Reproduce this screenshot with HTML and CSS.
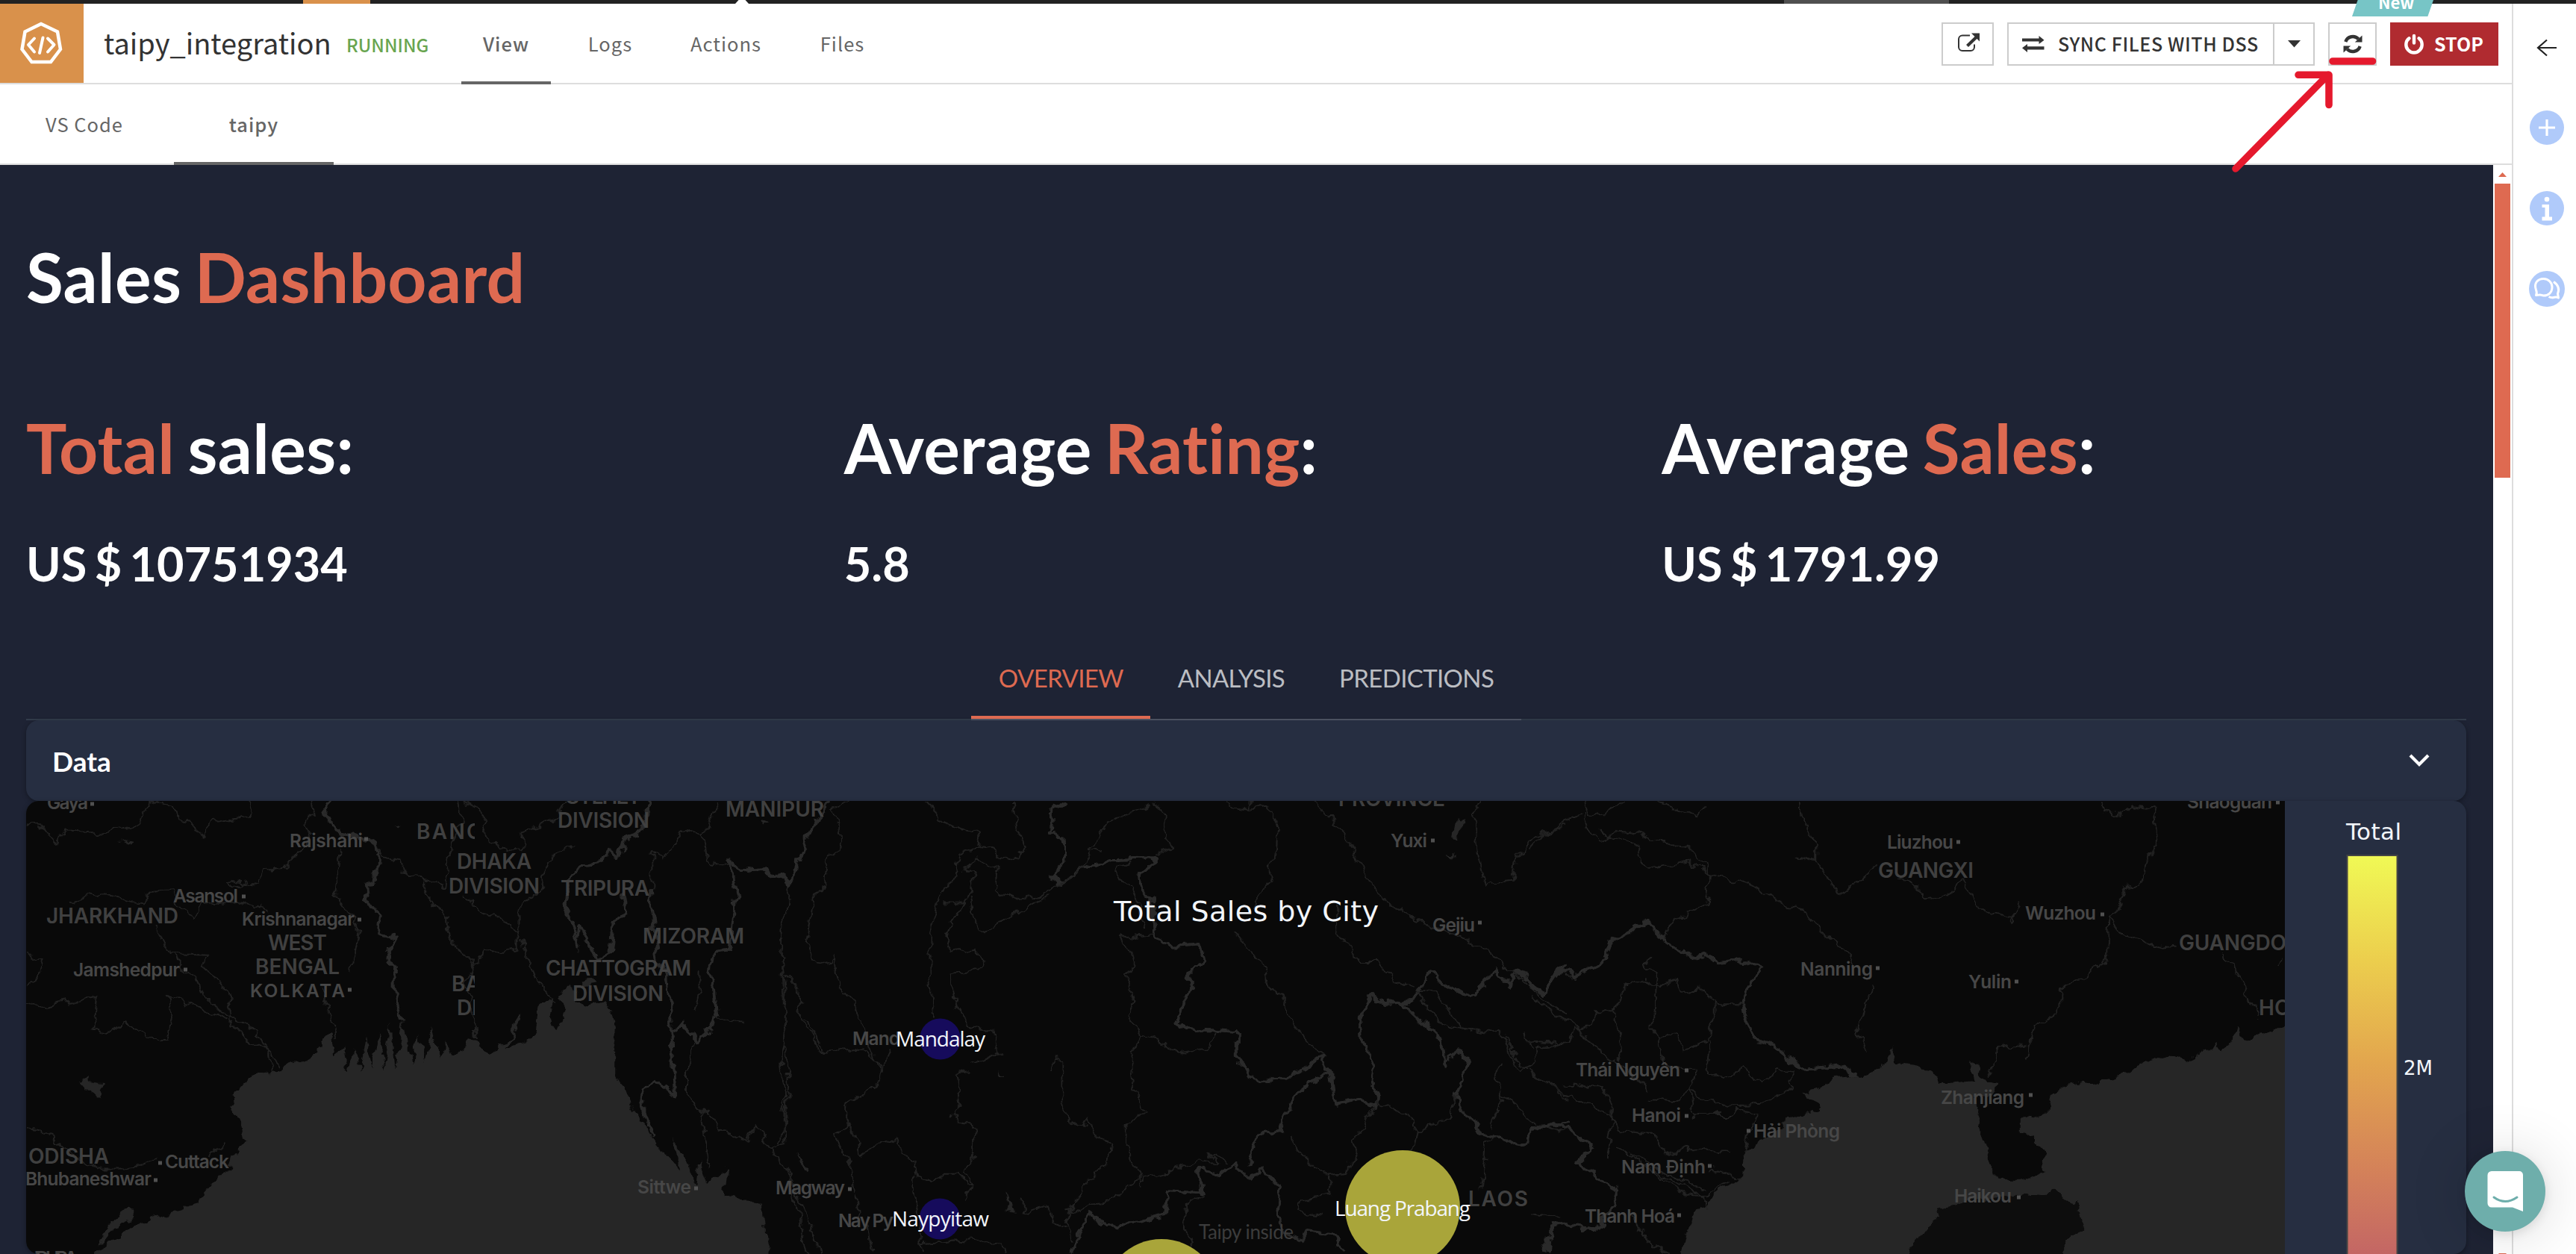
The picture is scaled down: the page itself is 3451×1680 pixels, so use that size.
FILE: index.html
```html
<!DOCTYPE html>
<html lang="en">
<head>
<meta charset="utf-8">
<title>taipy_integration</title>
<link rel="stylesheet" href="styles.css">
</head>
<body>
<div class="strip"><span class="strip-active"></span><i class="strip-notch"></i><span class="strip-search"></span></div>
<div class="shell">
  <main class="main">
    <header class="header">
      <div class="logo">
        <svg width="58" height="57" viewBox="0 0 58 57" fill="none" stroke="#fff" stroke-width="4.500" stroke-linecap="round" stroke-linejoin="round">
          <path stroke-linejoin="miter" d="M29 3 51 13.500 55 37 42 54H16.500L3.500 37 7.500 13.500Z"/>
          <path stroke-width="4" d="M20 22.500 12 31 20 40.500M38 22.500 46.500 31 38 40.500M31.500 21.500 27 42"/>
        </svg>
      </div>
      <h1 class="title">taipy_integration</h1>
      <span class="status">RUNNING</span>
      <nav class="tabs">
        <a class="tab tab-view on">View</a>
        <a class="tab tab-logs">Logs</a>
        <a class="tab tab-actions">Actions</a>
        <a class="tab tab-files">Files</a>
      </nav>
      <div class="actions">
        <div class="btn btn-open">
          <svg width="32" height="28" viewBox="0 0 32 28"><path d="M17 4.500H7a5 5 0 0 0-5 5V20a5 5 0 0 0 5 5H18a5 5 0 0 0 5-5V16.500" fill="none" stroke="#333" stroke-width="2"/><path d="M13.500 18.500 26 6.500" stroke="#333" stroke-width="4.200"/><path d="M19 1.500H30V12.500Z" fill="#333"/></svg>
        </div>
        <div class="btn btn-sync">
          <div class="sync-main">
            <svg width="30" height="22" viewBox="0 0 30 22" fill="#333"><path d="M0 3.500H22.500V0L29.500 5.700 22.500 11V7.600H0ZM29.500 18.400H7V22L0 16.200 7 11V14.200H29.500Z"/></svg>
            <span class="sync-text">SYNC FILES WITH DSS</span>
          </div>
          <div class="sync-caret"><svg width="17" height="10"><path d="M0 0H17L8.500 9.500Z" fill="#333"/></svg></div>
        </div>
        <div class="btn btn-refresh">
          <svg width="26" height="26" viewBox="0 0 26 26"><path d="M3.300 10A10.200 10.200 0 0 1 20.500 6.300M22.700 16A10.200 10.200 0 0 1 5.500 19.700" fill="none" stroke="#333" stroke-width="4.400"/><path d="M25.500 1.500V10.500H15.800ZM.500 24.500V15.500H10.200Z" fill="#333"/></svg>
          <span class="badge">New</span>
        </div>
        <div class="btn-stop">
          <svg width="28" height="28" viewBox="0 0 28 28" fill="none" stroke="#fff" stroke-width="4.400" stroke-linecap="round"><path d="M7.500 6.300A10.700 10.700 0 1 0 20.500 6.300M14 3V12.500"/></svg>
          <span class="stop-text">STOP</span>
        </div>
      </div>
    </header>
    <nav class="subtabs">
      <a class="subtab sub-code">VS Code</a>
      <a class="subtab sub-taipy on">taipy</a>
    </nav>
    <div class="frame">
      <section class="page">
        <h2 class="h1">Sales <b>Dashboard</b></h2>
        <div class="kpis">
          <div class="kpi"><h2 class="h1"><b>Total</b> sales:</h2><p class="value">US $ 10751934</p></div>
          <div class="kpi"><h2 class="h1">Average <b>Rating</b>:</h2><p class="value">5.8</p></div>
          <div class="kpi"><h2 class="h1">Average <b>Sales</b>:</h2><p class="value">US $ 1791.99</p></div>
        </div>
        <div class="viewtabs"><div class="viewlist"><a class="on">OVERVIEW</a><a>ANALYSIS</a><a>PREDICTIONS</a></div></div>
        <div class="card data"><span>Data</span><svg width="28" height="20" viewBox="0 0 28 20" fill="none" stroke="#fff" stroke-width="4.200"><path d="M2 3 14 15 26 3"/></svg></div>
        <div class="card chart">
<svg width="3269" height="607" viewBox="35 1073 3269 607">
<defs>
<filter id="rough" x="0" y="0" width="100%" height="100%"><feTurbulence type="fractalNoise" baseFrequency="0.055" numOctaves="3" seed="4"/><feDisplacementMap in="SourceGraphic" scale="17" xChannelSelector="R" yChannelSelector="G"/></filter>
<linearGradient id="bar" x1="0" y1="0" x2="0" y2="1"><stop offset="0" stop-color="#f0f955"/><stop offset=".25" stop-color="#ecce4d"/><stop offset=".5" stop-color="#e2a54e"/><stop offset=".75" stop-color="#d48259"/><stop offset="1" stop-color="#c06067"/></linearGradient>
<clipPath id="area"><rect x="35" y="1073" width="3026" height="607"/></clipPath>
<clipPath id="tile"><rect x="35" y="1073" width="601" height="607"/></clipPath>
</defs>
<g clip-path="url(#area)">
<rect x="35" y="1073" width="3026" height="607" fill="#090909"/>
<g filter="url(#rough)">
<rect x="0" y="1040" width="3080" height="660" fill="none"/>
<g transform="translate(0 1040) scale(.7015 .4082)">
<path class="sea" d="M165 1600 205 1530 250 1485 310 1442 378 1400 388 1375 405 1335 440 1290 445 1245 468 1200 460 1150 448 1110 441 1080 447 1045 465 1005 490 975 530 968 545 950 585 932 605 905 620 860 630 842 638 850 642 925 652 890 665 965 675 890 690 965 700 850 712 960 725 840 735 965 745 800 755 960 770 800 785 945 800 850 815 940 825 830 840 930 850 870 862 915 890 895 895 865 910 870 925 900 935 908 950 895 975 850 990 790 1000 785 985 835 965 890 1010 870 1025 830 1030 745 1055 715 1045 820 1060 830 1080 770 1072 720 1090 690 1105 745 1120 755 1158 730 1170 790 1180 850 1175 900 1175 985 1195 1030 1205 1080 1225 1130 1245 1185 1270 1240 1300 1300 1282 1185 1310 1255 1330 1345 1335 1260 1350 1340 1390 1280 1385 1370 1405 1380 1420 1400 1455 1400 1460 1500 1485 1600Z"/>
<path class="sea" d="M190 1530 205 1470 245 1420 260 1425 258 1450 215 1480 200 1525ZM155 1010 170 980 178 1000 195 1005 185 1025 192 1048 172 1045ZM232 210 252 215 248 225ZM755 160 768 165 762 175ZM1458 150 1470 160 1460 168ZM1110 670 1130 665 1135 685 1112 690Z"/>
<path class="strong" d="M632 81 618 125 640 175 715 220 722 260 718 340 697 355 700 400 725 455 720 515 760 530 740 580 755 650 755 720 770 800M1240 60 1238 120 1220 190 1190 210 1185 270 1165 240 1145 285 1105 290 1085 340 1080 420 1095 480 1105 560 1110 495 1140 595 1165 580 1170 480 1195 440 1190 380M1240 380 1255 590 1275 660 1285 850 1290 1050 1250 995 1230 1030 1225 1075 1235 1130 1250 1185M1555 140 1530 260 1510 350 1460 305 1430 315 1390 275 1408 390 1398 480 1395 570 1365 575 1360 640 1370 780 1335 870 1300 810 1285 850"/>
<path class="thin" d="M50 160 85 170 105 220 125 180 190 185 265 160 285 81M285 81 335 105 345 150 370 155 388 205 405 150 475 135 480 81M595 81 600 120 585 150 590 190 570 250 545 300 505 310 495 355 455 350 430 345 445 370 475 345M135 405 200 385 265 410 290 380 330 375M330 375 340 430 370 465 380 425 462 410 510 440M300 490 310 540 325 585 400 590 385 620 430 690 440 760 435 795 485 885 500 880 535 950M330 590 375 660 390 720 420 770 490 830 510 900 520 970M50 580 85 595 75 650 50 680M50 745 75 760 185 725 180 830 210 840 240 810 290 860 315 860 325 790 320 720 370 750 430 795M50 1155 75 1160 105 1195 190 1290 240 1290 300 1260M400 1250 430 1200M650 240 640 380 665 450 685 510 680 570 670 650M615 700 630 800 645 850M720 225 730 270 765 280 770 310 850 360 860 240 880 150 875 81M810 340 810 390 850 450 860 540 905 620 890 680 905 800 908 860M905 620 930 570 960 580 990 570 990 520 960 465 920 445 885 390M990 520 990 450 1005 410 1030 370 1060 250 1100 235M885 81 920 110 935 220 965 235 1000 240 995 180 1060 150 1080 81M995 530 1010 600 1030 680 1060 740M1245 240 1245 380M1245 240 1265 270 1305 180 1345 200 1370 81M1345 200 1350 280 1390 290M1335 640 1335 700 1325 770M1330 870 1310 950 1310 1040 1340 1100 1360 1105 1370 1165 1430 1200 1440 1145 1470 1220 1500 1200 1498 1040 1490 930 1500 810 1490 500 1505 430 1510 350M1500 650 1525 700 1530 800 1550 810 1568 905M1340 1100 1350 1220 1355 1290M1360 790 1390 810 1420 815M1470 1220 1500 1290 1520 1390 1540 1568"/>
</g>
<g transform="translate(1000 1040) scale(.7015 .4082)">
<path class="strong" d="M158 81 130 150 105 260 85 350 40 315 0 305M612 81 585 110 583 185 605 200 608 280 583 330 600 350 640 300 690 275 780 270 750 330 755 370 775 400 780 530 820 555 865 550 875 600 845 650 850 700 820 805 840 828 935 840 935 915 965 990 1020 1000 1050 980 1100 910 1115 970 1050 1040 1020 1160 975 1175 960 1280M1115 970 1125 1075 1170 1060 1200 1085 1210 1060 1195 1020 1200 950 1175 870 1170 790 1195 715 1215 745 1270 740 1305 645 1385 730 1430 630 1460 690 1470 640 1525 715 1560 625M1255 745 1330 870 1335 945 1355 900 1375 930 1355 1050 1370 1110 1410 1170 1480 1215 1500 1155 1568 1135M960 1320 930 1270 905 1305 865 1290 870 1365 805 1360 800 1440 740 1470 685 1475 655 1440 630 1520 620 1568M960 1320 985 1285 1020 1350 1015 1440 1030 1500 1060 1525 1070 1490 1120 1500 1140 1568M1568 1470 1535 1480 1530 1568"/>
<path class="thin" d="M200 81 165 110 185 230 155 260 150 350 130 380 115 550 125 600 160 615 168 590 175 690 210 750 235 890 260 970 275 890M340 81 385 160 445 190 440 230 405 260 400 320 370 400 350 480 350 640 355 790M440 230 465 235 490 275 520 265 530 230 515 170 510 81M445 260 415 300 435 310 430 380 415 420 380 420M445 260 480 310 475 375 510 405 560 390 600 350 640 300 660 250M430 400 440 500 460 510 490 470 560 400 580 395M415 420 390 480 380 550 395 580 435 570 460 600 440 630 390 645 400 750 430 820 470 835 485 910 430 940M420 965 400 980 405 1070 390 1115 435 1155 435 1240 420 1290 430 1340 415 1385M65 560 75 700 70 880 80 960 75 1150 65 1200M80 650 100 700 105 810 125 830 135 905 225 895 260 950 250 1010 190 1080 190 1150 170 1180 200 1300 215 1450M190 1150 210 1170 218 1240 250 1210 290 1190 300 1240 320 1260 325 1310 350 1330 375 1310 410 1310 430 1340M320 1310 330 1450 335 1568M0 1195 15 1145 45 1220 80 1300 110 1420 140 1568M780 81 800 120 795 200 820 225 780 260M775 95 720 130 690 150 655 240 680 250M735 280 710 300 720 350 750 420 760 490M780 515 715 530 730 570 745 620 725 650 740 740 730 790 755 850 735 900 735 960 745 1050 765 1100 725 1140 725 1220 750 1310 755 1340M755 850 790 870 830 915 880 900 895 840M580 965 590 920 605 940 605 1080 615 1140 645 1150 655 1120 665 1180 695 1200 690 1260 640 1350 610 1460 620 1520M915 81 930 105 960 110 1000 100 1015 170 1010 280 995 300 1000 340 975 390 975 430M960 60 960 110M930 510 960 570 985 610 1000 680 1030 760 1075 890 1100 905M1080 81 1130 160 1150 210 1170 290 1210 390 1260 460 1310 490 1400 550 1470 650 1520 730 1568 780M1125 430 1125 510 1150 560 1170 610 1205 610 1235 670 1275 690M1400 81 1390 130 1395 250 1410 360 1435 345 1465 340 1470 270 1500 200 1568 160M1280 700 1320 710 1350 790 1370 830 1420 840 1435 820 1465 930 1480 970 1510 940 1510 890 1568 880M1280 700 1305 780 1340 820 1370 830M1440 950 1430 1000 1445 1060 1420 1150M1440 1040 1510 1140 1568 1170M1490 840 1500 900M1450 850 1470 930 1510 980 1568 1060M1200 1085 1175 1150 1150 1200 1170 1250 1140 1300 1100 1310 1060 1240 1035 1175M1200 1070 1260 1110 1285 1165 1340 1120 1355 1050M1285 1165 1280 1220 1250 1260M1430 1180 1410 1210 1405 1290 1400 1360M755 1325 790 1310 860 1260 900 1270 880 1235 915 1265M610 1430 660 1405 690 1400 750 1320M870 1370 835 1410 840 1490 850 1568M1115 1310 1115 1370 1060 1390 1055 1430 1100 1440M530 1390 530 1430 570 1410 585 1460 610 1480M230 1450 240 1568M330 1530 400 1520 490 1530 495 1568"/>
<path class="sea" d="M495 1360 510 1430 500 1425ZM95 1230 125 1305 110 1290ZM485 965 492 985 485 985ZM1358 140 1370 145 1360 205 1350 205ZM1340 255 1350 260 1342 268Z"/>
</g>
<g transform="translate(2050 1040) scale(.8935 .4082)">
<path class="sea" d="M222 1600 232 1500 250 1420 265 1400 290 1350 318 1325 320 1230 345 1195 375 1160 380 1130 410 1110 435 1100 410 1045 440 1020 455 990 490 985 530 960 542 880 550 950 600 965 612 1005 665 995 658 930 680 995 700 1005 698 1035 660 1060 672 1090 670 1140 680 1200 690 1275 705 1325 735 1325 768 1295 772 1240 757 1195 735 1160 735 1130 775 1105 780 1040 800 1020 850 1000 900 975 905 950 960 910 985 935 1030 880 1040 905 1060 825 1075 865 1100 850 1150 790 1150 1600Z"/>
<path class="land" d="M555 1600 585 1500 615 1450 610 1420 640 1405 690 1385 740 1375 770 1380 785 1350 800 1390 818 1395 827 1480 805 1530 790 1600Z"/>
<path class="strong" d="M0 685 20 715 45 630 65 660 110 610 120 545 175 478 200 540 245 600 265 585 285 615 320 600 345 635 325 700 320 750 335 860 370 890 410 960 465 950 490 985M0 1170 40 1135 95 1215 70 1270 100 1320 130 1365 125 1410 95 1490 35 1470 20 1568"/>
<path class="thin" d="M80 81 85 125 105 130 140 81M190 81 250 130 265 100M80 125 85 180 105 215 130 175 160 180 200 220 235 225 270 320 330 355 385 430 410 440 440 510 480 590 490 620M105 180 155 220 165 280 190 300 235 280 270 320 265 420 215 470 205 520 200 540M0 235 20 185 75 130M405 81 405 120 430 230 430 280 395 262M430 280 465 390 490 350 520 290M650 340 625 400 590 405 570 350 550 330M650 340 680 450 720 470 735 420M855 81 860 120 885 130 900 95 935 105 940 200 925 280 915 355 895 360 880 440 868 460 865 600 835 655 795 700 795 780 755 810 745 920M868 460 885 515 930 560 970 550M1035 580 1060 640 1075 720 1095 790M1130 600 1120 620M745 880 705 890 700 940 685 980M515 690 500 770 490 850 500 900M0 720 60 810 120 920 180 1030M0 870 60 880 65 830 90 820 95 770 125 770 140 700 155 665 195 690 215 660 220 710 260 700 280 750 320 750M180 590 170 620 190 650 185 830 195 860 220 845 230 900 265 870 275 800 275 740M125 770 135 850 140 900 130 930M195 860 200 950 250 960 240 1030 250 1050 290 1080 350 1075 390 1020 395 970 370 960 345 1010 320 960 290 990 265 980 270 870M0 970 50 1040 120 1110 140 1170 190 1180 205 1240 240 1220 300 1230M50 1010 90 1020 110 1020 125 1120 115 1250M180 1060 215 1070 240 1030 245 1110 300 1110 310 1090 340 1115 320 1230M130 1220 180 1290 230 1370 260 1380 300 1330M190 1300 250 1370 265 1420M270 1290 300 1300 315 1330M150 1240 210 1310 265 1360M150 1440 175 1530 210 1568M5 1430 40 1440"/>
</g>
</g>
<g class="prov">
<g clip-path="url(#tile)"><text x="558" y="1124" textLength="88">BANG</text><text x="605" y="1328">BARI</text><text x="612" y="1360">DIVI</text></g>
<text x="612" y="1164" textLength="100">DHAKA</text><text x="601" y="1197" textLength="122">DIVISION</text>
<text x="758" y="1077" textLength="101">SYLHET</text><text x="747" y="1109" textLength="123">DIVISION</text>
<text x="751" y="1200" textLength="119">TRIPURA</text><text x="972" y="1094" textLength="132">MANIPUR</text>
<text x="62" y="1237" textLength="177">JHARKHAND</text><text x="359" y="1273" textLength="79">WEST</text><text x="342" y="1305" textLength="113">BENGAL</text>
<text x="861" y="1264" textLength="136">MIZORAM</text><text x="731" y="1307" textLength="195">CHATTOGRAM</text><text x="767" y="1341" textLength="122">DIVISION</text>
<text x="38" y="1559" textLength="108">ODISHA</text><text x="1793" y="1080" textLength="143">PROVINCE</text><text x="1967" y="1616" textLength="80">LAOS</text>
<text x="2516" y="1176" textLength="128">GUANGXI</text><text x="2919" y="1273" textLength="144">GUANGDO</text><text x="3026" y="1360">HO</text>
</g>
<g class="town">
<text x="63" y="1084" textLength="55">Gaya</text><text x="388" y="1135" textLength="98">Rajshahi</text><text x="232" y="1209" textLength="87">Asansol</text>
<text x="324" y="1240" textLength="151">Krishnanagar</text><text x="335" y="1336" textLength="127">KOLKATA</text><text x="98" y="1308" textLength="143">Jamshedpur</text>
<text x="221" y="1565" textLength="86">Cuttack</text><text x="34" y="1588" textLength="169">Bhubaneshwar</text><text x="854" y="1599" textLength="72">Sittwe</text>
<text x="1039" y="1600" textLength="93">Magway</text><text x="1142" y="1400" textLength="64">Mand</text><text x="1123" y="1644" textLength="74">Nay Py</text>
<text x="1863" y="1135" textLength="49">Yuxi</text><text x="1919" y="1248" textLength="57">Gejiu</text><text x="2930" y="1083" textLength="114">Shaoguan</text>
<text x="2528" y="1137" textLength="89">Liuzhou</text><text x="2713" y="1232" textLength="95">Wuzhou</text><text x="2412" y="1307" textLength="97">Nanning</text>
<text x="2637" y="1324" textLength="58">Yulin</text><text x="2111" y="1442" textLength="140">Thái Nguyên</text><text x="2600" y="1479" textLength="112">Zhanjiang</text>
<text x="2186" y="1503" textLength="66">Hanoi</text><text x="2349" y="1524" textLength="116">Hải Phòng</text><text x="2172" y="1572" textLength="113">Nam Định</text>
<text x="2618" y="1611" textLength="77">Haikou</text><text x="2123" y="1638" textLength="121">Thanh Hoá</text><text x="34" y="1694" textLength="70">NDHRA</text>
</g>
<path class="dots" d="M121 1077h5M488 1124h5M324 1201h5M479 1232h5M466 1326h5M246 1299h5M212 1558h5M206 1581h5M930 1592h5M1136 1593h5M1917 1126h5M1980 1236h5M3049 1075h5M2621 1128h5M2814 1225h5M2513 1297h5M2699 1315h5M2257 1434h5M2718 1467h5M2257 1495h5M2340 1515h5M2288 1562h5M2702 1604h5M2247 1628h5"/>
<circle cx="1259.500" cy="1392" r="27.500" fill="#160b5c"/><circle cx="1259" cy="1633" r="27.500" fill="#160b5c"/>
<circle cx="1879" cy="1618" r="77" fill="#a9a53a"/><circle cx="1556" cy="1738" r="78" fill="#a9a53a"/>
<g class="city"><text x="1200" y="1402" textLength="120">Mandalay</text><text x="1195" y="1643" textLength="130">Naypyitaw</text><text x="1788" y="1629" textLength="182">Luang Prabang</text></g>
<text class="inside" x="1606" y="1660" textLength="127">Taipy inside</text>
</g>
<text class="charttitle" x="1492" y="1234" textLength="355">Total Sales by City</text>
<text class="bartitle" x="3143" y="1124.500" textLength="74">Total</text>
<rect x="3144.500" y="1146" width="67" height="560" fill="url(#bar)" stroke="#444" stroke-width="2"/>
<text class="bartick" x="3220" y="1440" textLength="39">2M</text>
</svg>
        </div>
      </section>
      <div class="scroll"><svg width="11" height="6"><path d="M0 6H11L5.500 0Z" fill="#de6a51"/></svg><i class="thumb"></i><svg class="down" width="11" height="6"><path d="M0 0H11L5.500 6Z" fill="#de6a51"/></svg></div>
    </div>
  </main>
  <aside class="rail">
    <svg width="28" height="24" viewBox="0 0 28 24" fill="none" stroke="#222" stroke-width="2.200"><path d="M27 12H2M14 1.500 2 12 14 22.500"/></svg>
    <svg width="48" height="48" viewBox="0 0 48 48"><circle cx="24" cy="24" r="23" fill="#b0cafa"/><path d="M13 24H35M24 13V35" stroke="#fff" stroke-width="3.200"/></svg>
    <svg width="48" height="48" viewBox="0 0 48 48"><circle cx="24" cy="24" r="23" fill="#b0cafa"/><circle cx="24" cy="12" r="3.300" fill="#fff"/><path d="M17.500 19H27V35.500H31V40.500H17.500V35.500H21.500V23H17.500Z" fill="#fff"/></svg>
    <svg width="48" height="48" viewBox="0 0 48 48" fill="none" stroke="#fff" stroke-width="3" stroke-linejoin="round"><circle cx="24" cy="24" r="24" fill="#b0cafa" stroke="none"/><path d="M9.500 32.500C11 29.500 10.500 28 9.500 25.500C6 16 12 10.500 19.500 10.500C26.500 10.500 31 16 31 21.500C31 29 26 33 19.500 33C17 33 16.500 31.500 14 32Z"/><path d="M33 14.500C39.500 19 41 24.500 38.500 30.500L39.500 36C37 34.500 36 35 33 35.500C30.500 36 28.500 35.500 26.500 34.500"/></svg>
  </aside>
</div>
<svg class="mark" width="3451" height="240" fill="none" stroke="#e5192d" stroke-width="9.600" stroke-linecap="round" stroke-linejoin="round"><path d="M3125 82H3178.500M2995 226 3119 100M3079 100.300H3120V140.500"/></svg>
<div class="messenger"><svg width="50" height="56" viewBox="0 0 50 56"><path d="M6 0H43a5 5 0 0 1 5 5V54L34 48.500H6a5.500 5.500 0 0 1-5.500-5.500V5.500A5.500 5.500 0 0 1 6 0Z" fill="#fff"/><path d="M9 35Q24 46 40 35" fill="none" stroke="#6eaeab" stroke-width="3" stroke-linecap="round"/></svg></div>
</body>
</html>
```

FILE: styles.css
```css
* { box-sizing: border-box; }
body { margin: 0; width: 3451px; height: 1680px; overflow: hidden; background: #fff; font-family: "Noto Sans CJK SC", "Noto Sans", sans-serif; color: #666; display: flex; flex-direction: column; }
svg { display: block; flex: none; }
h1, h2, p { margin: 0; font-weight: normal; }

.strip { height: 5px; background: #222; display: flex; flex: none; }
.strip-active { width: 90px; margin-left: 406px; background: #d9914b; }
.strip-notch { width: 18px; margin-left: 489px; background: #fff; clip-path: polygon(25% 0, 75% 0, 100% 100%, 0 100%); }
.strip-search { width: 221px; margin-left: 1387px; background: #505050; }

.shell { display: flex; height: 1675px; }
.main { width: 3365px; display: flex; flex-direction: column; }
.header { height: 108px; border-bottom: 2px solid #ddd; display: flex; flex: none; }
.logo { width: 112px; height: 106px; background: #d9914b; padding: 24px 0 0 26px; }
.title { width: 324px; padding-left: 27px; color: #333; font-size: 38px; line-height: 104px; white-space: nowrap; }
.status { width: 182px; padding-left: 28px; color: #69a550; font-size: 24px; font-weight: 500; line-height: 110px; }
.tabs { display: flex; width: 620px; }
.tab { height: 108px; line-height: 106px; font-size: 25.500px; letter-spacing: 1px; text-align: center; border-bottom: 4px solid transparent; }
.on { font-weight: 500; }
.tab.on, .subtab.on { border-bottom: 4px solid #666; }
.tab-view { width: 120px; }
.tab-logs { width: 159px; }
.tab-actions { width: 151px; }
.tab-files { width: 161px; }

.actions { display: flex; margin-left: auto; padding: 25px 18px 0 0; gap: 18px; color: #333; font-weight: 500; font-size: 25px; }
.btn { height: 58px; border: 2px solid #ccc; display: flex; align-items: center; justify-content: center; position: relative; }
.btn-open { width: 70px; }
.btn-open svg { margin-top: -5px; margin-left: 3px; }
.btn-sync { width: 412px; }
.sync-main { display: flex; align-items: center; width: 354px; height: 54px; padding-left: 18px; gap: 18px; line-height: 50px; white-space: nowrap; }
.sync-text { margin-top: -2px; letter-spacing: .6px; }
.sync-caret { flex: 1; height: 54px; border-left: 2px solid #ccc; padding: 22px 0 0 18px; }
.btn-refresh { width: 65px; }
.badge { position: absolute; left: 30px; top: -32px; width: 109px; height: 22px; padding-left: 35px; background: #77c5c6; color: #fff; font-size: 22px; font-weight: 700; line-height: 5px; clip-path: polygon(7% 0, 100% 0, 93% 100%, 0 100%); }
.btn-stop { width: 145px; height: 58px; background: #b02b30; color: #fff; display: flex; align-items: center; padding-left: 18px; gap: 13px; line-height: 54px; }
.stop-text { font-weight: 700; margin-top: -2px; }

.subtabs { height: 108px; border-bottom: 2px solid #ddd; display: flex; flex: none; font-size: 25.500px; letter-spacing: 1px; line-height: 103px; }
.subtab { height: 108px; padding-top: 1px; text-align: center; }
.sub-code { width: 226px; margin-right: 7px; }
.sub-taipy { width: 214px; }

.frame { display: flex; flex: 1; }
.page { width: 3340px; background: #1e2334; padding: 82px 36px 0 35px; font-family: Lato, sans-serif; color: #fff; font-variant-ligatures: none; }
.h1 { font-size: 91px; font-weight: 700; line-height: 136px; height: 229px; white-space: nowrap; letter-spacing: .3px; word-spacing: -5px; }
.h1 b { color: #de6a51; font-weight: 700; }
.kpis { display: grid; grid-template-columns: repeat(3, 1fr); column-gap: 18px; height: 312px; }
.kpi .h1 { height: 184px; }
.value { font-size: 63px; font-weight: 700; line-height: 77px; word-spacing: -5px; }
.viewtabs { display: flex; justify-content: center; height: 121px; border-bottom: 2px solid #323c4b; }
.viewlist { display: flex; border-bottom: 2px solid #4b5160; height: 121px; color: #bbbdc2; font-size: 33px; line-height: 128px; letter-spacing: -.65px; }
.viewlist a { padding: 0 36.500px; height: 119px; }
.viewlist .on { color: #de6a51; border-bottom: 4px solid #de6a51; font-weight: 400; }
.card { background: #262e41; border-radius: 17px; overflow: hidden; box-shadow: 0 2px 6px rgba(0, 0, 0, .35); }
.data { height: 108px; display: flex; align-items: center; justify-content: space-between; padding: 0 49px 0 35px; font-size: 37px; font-weight: 700; }
.chart { height: 607px; }

.sea { fill: #252525; }
.land { fill: #090909; }
.strong, .thin { fill: none; vector-effect: non-scaling-stroke; stroke-linejoin: round; }
.strong { stroke: #2b2b2b; stroke-width: 4; }
.thin { stroke: #202020; stroke-width: 2; }
.prov, .town { font-family: Inter, "Open Sans", sans-serif; font-weight: 600; fill: #404040; }
.prov { font-size: 28px; }
.town { font-size: 24.500px; fill: #474747; }
.dots { stroke: #505050; stroke-width: 5; }
.city { font-family: "Open Sans", sans-serif; font-size: 28px; fill: #f2f5fa; }
.inside { font-family: Lato, sans-serif; font-size: 26px; fill: #3c3c3c; }
.charttitle, .bartitle, .bartick { font-family: "DejaVu Sans", Verdana, sans-serif; fill: #f2f5fa; }
.charttitle { font-size: 38px; }
.bartitle { font-size: 31px; }
.bartick { font-size: 26px; }

.scroll { width: 25px; padding: 10px 2px 0; background: #fff; display: flex; flex-direction: column; align-items: center; }
.thumb { width: 21px; height: 394px; margin-top: 9px; background: #de6a51; }
.down { margin-top: 1039px; }
.rail { width: 86px; border-left: 2px solid #ddd; display: flex; flex-direction: column; align-items: center; padding: 47px 0 0 6px; }
.rail svg { margin-bottom: 60px; }
.rail svg:first-child { margin-bottom: 71px; }
.mark { position: absolute; left: 0; top: 0; }
.messenger { position: absolute; left: 3302px; top: 1542px; width: 108px; height: 108px; border-radius: 50%; background: #6eaeab; padding: 27px 0 0 30px; box-shadow: 0 4px 14px rgba(0, 0, 0, .1), 0 4px 80px rgba(0, 0, 0, .16); }
```
